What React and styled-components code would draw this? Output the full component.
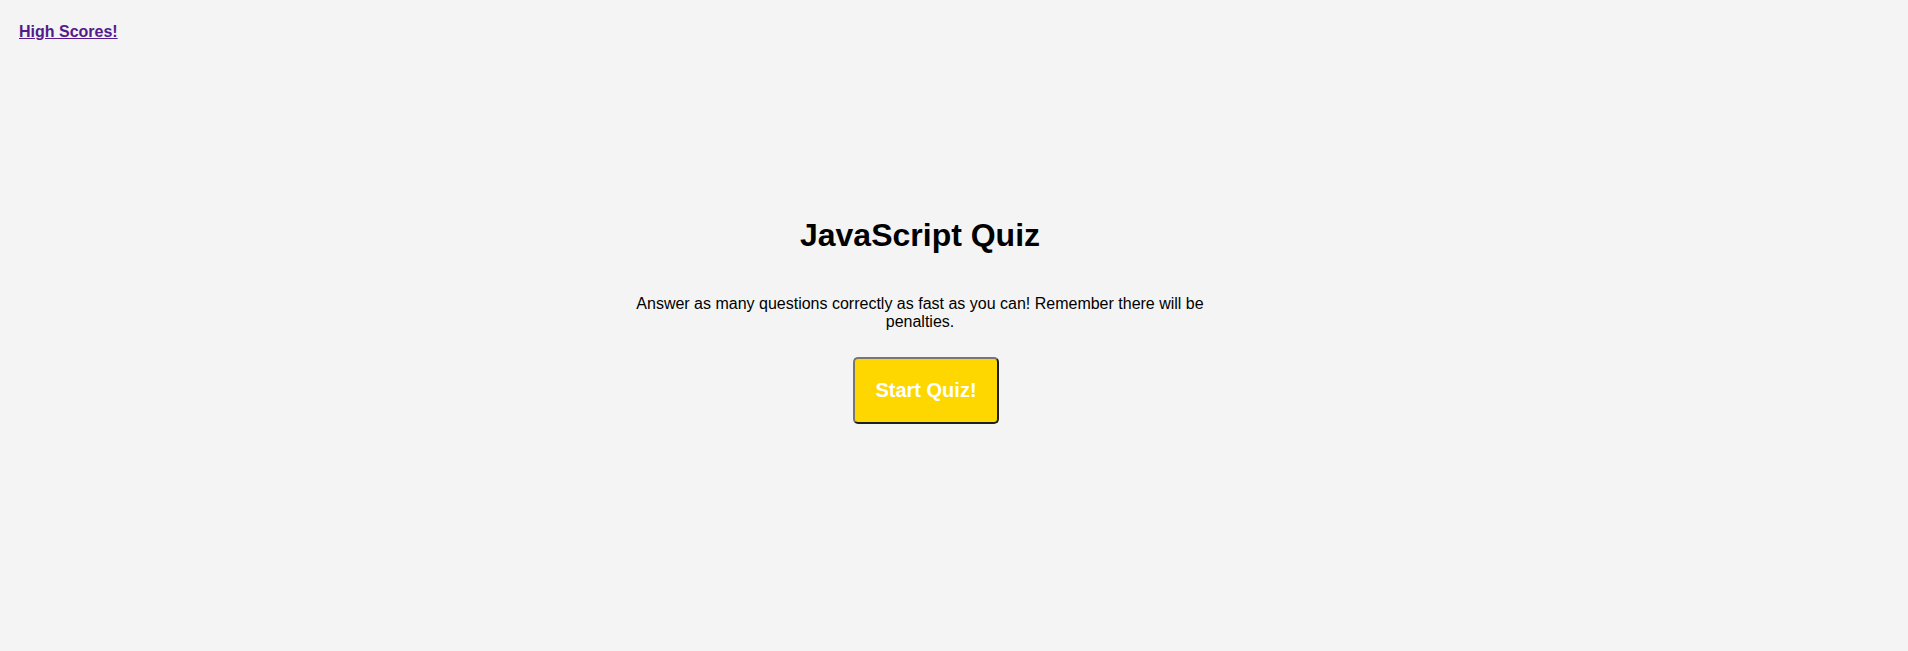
import React from "react";
import styled, { createGlobalStyle } from "styled-components";

const Global = createGlobalStyle`
  html, body { margin: 0; padding: 0; }
  body {
    background: #f4f4f4;
    font-family: "Liberation Sans", Arial, sans-serif;
    color: #000;
  }
`;

const Page = styled.div`
  min-height: 100vh;
  display: flex; flex-direction: column;
`;
const Header = styled.header`
  padding: 23px 19px 20px;
  display: flex; justify-content: space-between; align-items: center;
`;
const ScoresLink = styled.a`
  color: #551a8b;
  font-weight: bold;
  font-size: 16px;
  text-decoration: underline;
  cursor: pointer;
`;
const Main = styled.main`
  display: flex; flex-direction: column; align-items: center;
  padding: 156px 68px 0 0;
`;
const Title = styled.h1`
  margin: 0;
  font-size: 32px;
  font-weight: bold;
`;
const Intro = styled.p`
  margin: 41px 0 26px;
  width: 600px;
  font-size: 16px;
  text-align: center;
`;
const StartButton = styled.button`
  font-family: inherit;
  font-size: 20px;
  font-weight: bold;
  color: #fff;
  background: #ffd700;
  padding: 20px 20px;
  border: 2px solid;
  border-color: #767676 #1f1f1f #1f1f1f #767676;
  border-radius: 5px;
  margin-left: 12px;
  cursor: pointer;
`;

export default function App() {
  return (
    <Page>
      <Global />
      <Header>
        <ScoresLink href="#">High Scores!</ScoresLink>
      </Header>
      <Main>
        <Title>JavaScript Quiz</Title>
        <Intro>
          Answer as many questions correctly as fast as you can! Remember there will be penalties.
        </Intro>
        <StartButton>Start Quiz!</StartButton>
      </Main>
    </Page>
  );
}
